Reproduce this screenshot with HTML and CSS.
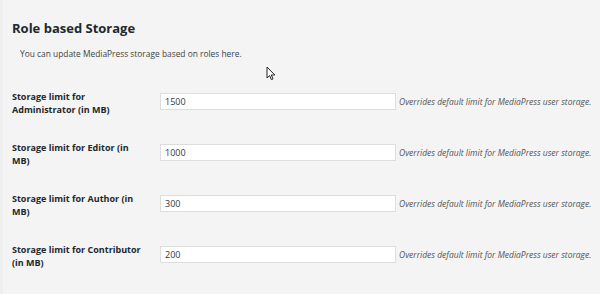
FILE: index.html
```html
<!DOCTYPE html>
<html>
<head>
<meta charset="utf-8">
<link rel="stylesheet" href="styles.css">
</head>
<body>
<div class="page">
  <h2 class="title">Role based Storage</h2>
  <p class="intro">You can update MediaPress storage based on roles here.</p>
  <div class="form">
    <div class="row">
      <label class="label">Storage limit for Administrator (in MB)</label>
      <div class="field"><input class="input" type="text" value="1500"><span class="hint">Overrides default limit for MediaPress user storage.</span></div>
    </div>
    <div class="row">
      <label class="label">Storage limit for Editor (in MB)</label>
      <div class="field"><input class="input" type="text" value="1000"><span class="hint">Overrides default limit for MediaPress user storage.</span></div>
    </div>
    <div class="row">
      <label class="label">Storage limit for Author (in MB)</label>
      <div class="field"><input class="input" type="text" value="300"><span class="hint">Overrides default limit for MediaPress user storage.</span></div>
    </div>
    <div class="row">
      <label class="label">Storage limit for Contributor (in MB)</label>
      <div class="field"><input class="input" type="text" value="200"><span class="hint">Overrides default limit for MediaPress user storage.</span></div>
    </div>
  </div>
  <svg class="cursor" width="10" height="15" viewBox="0 0 10 15">
    <path d="M1 1 L1 12 L3.6 9.6 L5.4 13.6 L7 12.9 L5.3 9 L8.8 9 Z" fill="#fff" stroke="#222" stroke-width="1" stroke-linejoin="round"/>
  </svg>
</div>
</body>
</html>
```

FILE: styles.css
```css
html, body {
  margin: 0;
  padding: 0;
  background: #f3f4f3;
}
body {
  font-family: "Open Sans", "DejaVu Sans", sans-serif;
  color: #333;
  width: 600px;
  height: 294px;
  overflow: hidden;
}
.page {
  position: relative;
  box-sizing: border-box;
  height: 294px;
  padding: 19px 0 0 12px;
  background: linear-gradient(to right, #eeefee 0, #eeefee 3px, #f3f4f3 3px);
}
.title {
  margin: 0;
  font-size: 13px;
  font-weight: 700;
  line-height: 18px;
  color: #23282d;
}
.intro {
  margin: 10px 0 0 8px;
  font-size: 8.4px;
  line-height: 13px;
  color: #444;
}
.form {
  margin-top: 33px;
  display: flex;
  flex-direction: column;
  gap: 22px;
}
.row {
  display: flex;
  align-items: flex-start;
  height: 29px;
}
.label {
  width: 130px;
  margin: -3px 18px 0 0;
  font-size: 9px;
  font-weight: 700;
  line-height: 13px;
  color: #23282d;
}
.field {
  display: flex;
  align-items: center;
}
.input {
  box-sizing: border-box;
  width: 236px;
  height: 17px;
  margin: 0;
  padding: 0 4px;
  border: 1px solid #dddddd;
  background: #fff;
  font-family: inherit;
  font-size: 9px;
  color: #32373c;
  outline: none;
}
.hint {
  margin-left: 3px;
  font-size: 8.5px;
  font-style: italic;
  color: #555;
  white-space: nowrap;
}
.cursor {
  position: absolute;
  left: 266px;
  top: 66px;
}
```
